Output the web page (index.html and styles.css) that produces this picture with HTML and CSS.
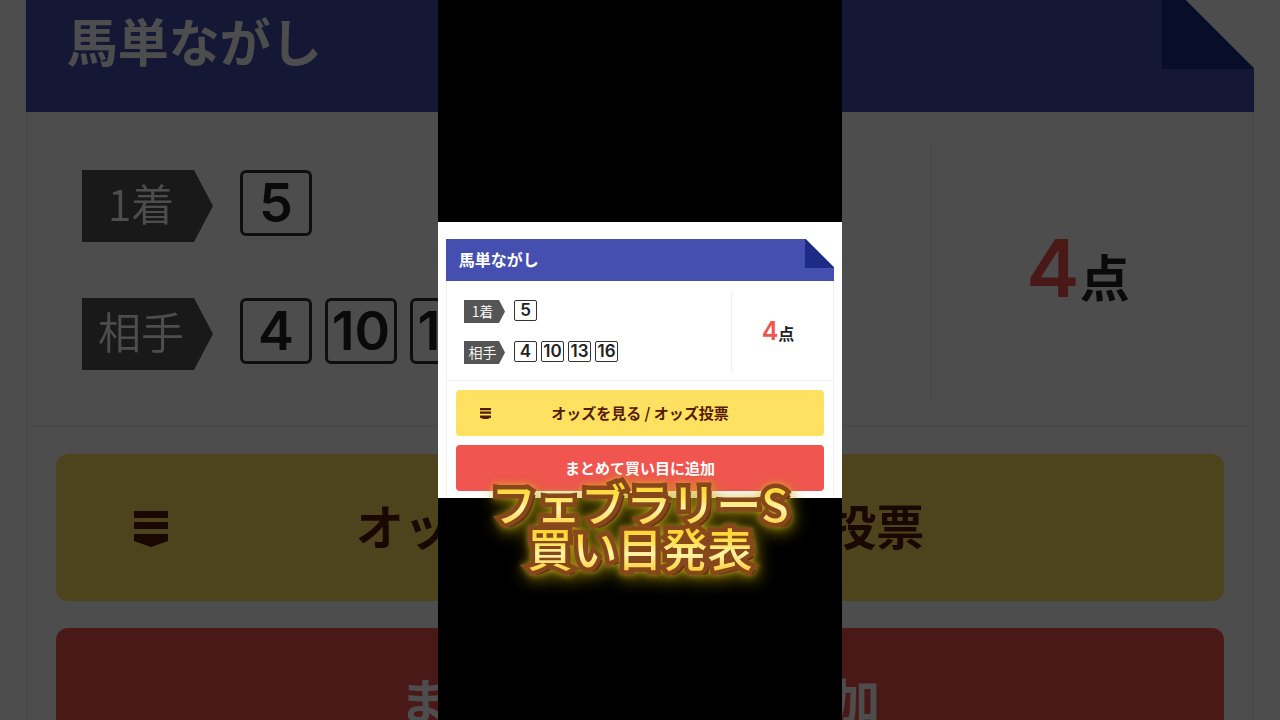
FILE: index.html
```html
<!DOCTYPE html>
<html lang="ja">
<head>
    <meta charset="UTF-8">
    <meta name="viewport" content="width=device-width, initial-scale=1.0">
    <title>フェブラリーS 買い目発表</title>
    <link rel="stylesheet" href="styles.css">
</head>
<body>
    <!-- fondo: la misma tarjeta, grande y oscura -->
    <div class="backdrop" inert>
        <div class="ticket ticket-large">
            <div class="ticket-header">馬単ながし</div>
            <div class="ticket-body">
                <div class="bet">
                    <div class="picks">
                        <div class="pick">
                            <span class="tag">1着</span>
                            <span class="num">5</span>
                        </div>
                        <div class="pick">
                            <span class="tag">相手</span>
                            <span class="num">4</span>
                            <span class="num">10</span>
                            <span class="num">13</span>
                            <span class="num">16</span>
                        </div>
                    </div>
                    <div class="total"><strong>4</strong>点</div>
                </div>
                <div class="actions">
                    <button type="button" class="btn btn-odds">
                        <svg class="icon" viewBox="0 0 34 36"><path d="M0 0h34v7H0zM0 11h34v7H0zM0 23h34v7l-17 6-17-6z"/></svg>
                        オッズを見る / オッズ投票
                    </button>
                    <button type="button" class="btn btn-add">まとめて買い目に追加</button>
                </div>
            </div>
        </div>
    </div>

    <!-- video vertical -->
    <main class="phone">
        <div class="ticket">
            <div class="ticket-header">馬単ながし</div>
            <div class="ticket-body">
                <div class="bet">
                    <div class="picks">
                        <div class="pick">
                            <span class="tag">1着</span>
                            <span class="num">5</span>
                        </div>
                        <div class="pick">
                            <span class="tag">相手</span>
                            <span class="num">4</span>
                            <span class="num">10</span>
                            <span class="num">13</span>
                            <span class="num">16</span>
                        </div>
                    </div>
                    <div class="total"><strong>4</strong>点</div>
                </div>
                <div class="actions">
                    <button type="button" class="btn btn-odds">
                        <svg class="icon" viewBox="0 0 34 36"><path d="M0 0h34v7H0zM0 11h34v7H0zM0 23h34v7l-17 6-17-6z"/></svg>
                        オッズを見る / オッズ投票
                    </button>
                    <button type="button" class="btn btn-add">まとめて買い目に追加</button>
                </div>
            </div>
        </div>
        <h1 class="caption">
            <span class="line" data-text="フェブラリーS"><span class="fill">フェブラリーS</span></span>
            <span class="line" data-text="買い目発表"><span class="fill">買い目発表</span></span>
        </h1>
    </main>
</body>
</html>
```
FILE: styles.css
```css
* {
    margin: 0px;
    padding: 0px;
    box-sizing: border-box;
}
html, body {
    height: 100%;
}
body {
    position: relative;
    display: flex;
    justify-content: center;
    overflow: hidden;
    background-color: black;
    font-family: "Noto Sans CJK JP", sans-serif;
}

.backdrop {
    position: absolute;
    inset: 0px;
    overflow: hidden;
    background-color: white;
    /* oscurece sobre el negro del body */
    opacity: 0.3;
}

.phone {
    position: relative;
    display: flex;
    flex-direction: column;
    justify-content: center;
    width: 100%;
    max-width: 404px;
    min-height: 100%;
    background-color: black;
}

/* tarjeta: las medidas cambian en .ticket-large */
.ticket {
    --side: 8px;
    --top: 17px;
    --header: 42px;
    --title: 16px;
    --fold: 29px;
    --line: 1px;
    --bet-top: 10px;
    --bet-bottom: 7px;
    --indent: 17px;
    --total: 102px;
    --total-top: 28px;
    --row-gap: 18px;
    --tag-w: 41px;
    --tag-h: 23px;
    --tag-tip: 6px;
    --tag-text: 14px;
    --tag-gap: 5px;
    --num-w: 23px;
    --num-h: 21px;
    --num-gap: 4px;
    --num-border: 1px;
    --num-text: 17px;
    --radius: 2px;
    --big: 25px;
    --unit: 16px;
    --gap: 9px;
    --pad: 9px;
    --btn: 46px;
    --btn-text: 15px;
    --btn-radius: 4px;
    --lift: 2px;
    --icon: 11px;
    --icon-left: 24px;
    padding: var(--top) var(--side) 0px;
    background-color: white;
}
.ticket-large {
    --side: 26px;
    --top: 0px;
    --header: 135px;
    --title: 51px;
    --fold: 92px;
    --line: 2px;
    --bet-top: 30px;
    --bet-bottom: 27px;
    --indent: 54px;
    --total: 322px;
    --total-top: 86px;
    --row-gap: 56px;
    --tag-w: 131px;
    --tag-h: 72px;
    --tag-tip: 19px;
    --tag-text: 43px;
    --tag-gap: 14px;
    --num-w: 72px;
    --num-h: 66px;
    --num-gap: 13px;
    --num-border: 3px;
    --num-text: 54px;
    --radius: 6px;
    --big: 80px;
    --unit: 50px;
    --gap: 27px;
    --pad: 28px;
    --btn: 147px;
    --btn-text: 48px;
    --btn-radius: 12px;
    --lift: 8px;
    --icon: 34px;
    --icon-left: 78px;
    margin-top: -23px;
}

.ticket-header {
    position: relative;
    display: flex;
    align-items: center;
    height: var(--header);
    padding-left: calc(var(--title) * 0.8);
    padding-bottom: var(--lift);
    background-color: #444fb0;
    color: white;
    font-size: var(--title);
    font-weight: bold;
    line-height: 1;
}
/* esquina doblada */
.ticket-header::after {
    content: "";
    position: absolute;
    top: 0px;
    right: 0px;
    width: var(--fold);
    height: var(--fold);
    background: linear-gradient(to top right, #1d2b86 50%, white calc(50% + 1px));
}

.ticket-body {
    border-left: var(--line) solid #f0f0f0;
    border-right: var(--line) solid #f0f0f0;
}

.bet {
    display: flex;
    padding: var(--bet-top) var(--pad) var(--bet-bottom) var(--indent);
    border-bottom: var(--line) solid #f0f0f0;
}
.picks {
    flex: 1;
    display: flex;
    flex-direction: column;
    gap: var(--row-gap);
    padding: calc(var(--row-gap) / 2) 0px;
}
.pick {
    display: flex;
    align-items: flex-start;
    gap: var(--num-gap);
}
.tag {
    display: flex;
    align-items: center;
    justify-content: center;
    width: var(--tag-w);
    height: var(--tag-h);
    margin-right: var(--tag-gap);
    padding-right: var(--num-gap);
    padding-bottom: var(--lift);
    background-color: #555555;
    clip-path: polygon(0 0, calc(100% - var(--tag-tip)) 0, 100% 50%, calc(100% - var(--tag-tip)) 100%, 0 100%);
    color: white;
    font-size: var(--tag-text);
    font-weight: 350;
    line-height: 1;
}
.num {
    display: flex;
    align-items: center;
    justify-content: center;
    width: var(--num-w);
    height: var(--num-h);
    border: var(--num-border) solid #333333;
    border-radius: var(--radius);
    color: #222222;
    font-family: Inter, sans-serif;
    font-size: var(--num-text);
    font-weight: 600;
    line-height: 1;
}
.total {
    display: flex;
    align-items: baseline;
    justify-content: center;
    width: calc(var(--total) - var(--pad));
    padding-top: var(--total-top);
    border-left: var(--line) solid #f0f0f0;
    color: #222222;
    font-size: var(--unit);
    font-weight: bold;
    line-height: 1;
}
.total strong {
    color: #f05550;
    font-family: Inter, sans-serif;
    font-size: var(--big);
    font-weight: 600;
}

.actions {
    display: flex;
    flex-direction: column;
    gap: var(--gap);
    padding: var(--gap) var(--pad) 7px;
}
.btn {
    position: relative;
    height: var(--btn);
    padding-bottom: var(--lift);
    border: none;
    border-radius: var(--btn-radius);
    font-family: inherit;
    font-size: var(--btn-text);
    font-weight: bold;
    line-height: 1;
    cursor: pointer;
}
.btn-odds {
    background-color: #ffe162;
    color: #551c00;
}
.btn-add {
    background-color: #f05550;
    color: white;
}
.icon {
    position: absolute;
    top: calc(50% - var(--icon) / 2);
    left: var(--icon-left);
    width: var(--icon);
    fill: currentColor;
}

/* texto dorado encima de la captura */
.caption {
    position: absolute;
    top: calc(200% / 3);
    left: 0px;
    right: 0px;
    isolation: isolate;
    text-align: center;
    font-size: 45px;
    line-height: 45px;
    font-weight: 500;
    filter: drop-shadow(0px 0px 3px rgba(255, 215, 50, 0.5)) drop-shadow(2px 4px 8px rgba(170, 150, 0, 0.7));
}
.line {
    position: relative;
    display: block;
}
.line::before {
    content: attr(data-text);
    position: absolute;
    inset: 0px;
    z-index: -1;
    color: #86481a;
    -webkit-text-stroke: 9px #86481a;
    text-shadow: 1px 1px #652f12, 2px 2px #652f12, 3px 3px #652f12, 4px 4px #652f12, 5px 4px #652f12;
}
.fill {
    background: linear-gradient(#ffd02e 20%, #ffe04a 40%, #fff3a8 60%, #ffd23e 85%);
    -webkit-background-clip: text;
    background-clip: text;
    color: transparent;
}
```
